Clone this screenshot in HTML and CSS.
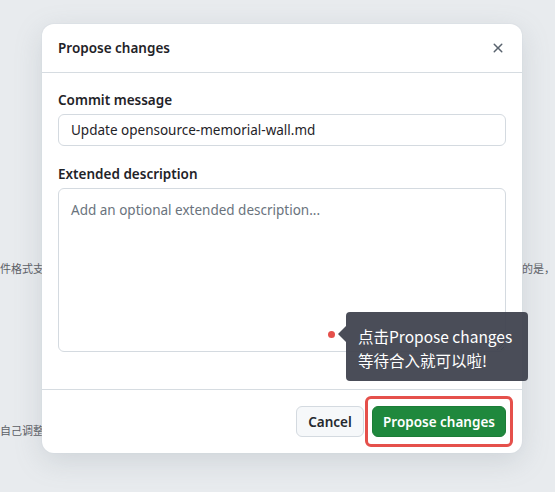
FILE: index.html
```html
<!DOCTYPE html>
<html lang="zh-CN">
<head>
<meta charset="utf-8">
<title>Propose changes</title>
<link rel="stylesheet" href="styles.css">
</head>
<body>
<div class="page">
  <div class="bg-line bg-line-1">
    <span class="bg-left">件格式支持</span>
    <span class="bg-right">的是，</span>
  </div>
  <div class="bg-line bg-line-2">
    <span class="bg-left">自己调整</span>
  </div>
</div>

<div class="dialog" role="dialog" aria-label="Propose changes">
  <div class="dialog-header">
    <h1 class="dialog-title">Propose changes</h1>
    <button class="close-btn" aria-label="Close">
      <svg width="16" height="16" viewBox="0 0 16 16" aria-hidden="true"><path d="M3.72 3.72a.75.75 0 0 1 1.06 0L8 6.94l3.22-3.22a.75.75 0 1 1 1.06 1.06L9.06 8l3.22 3.22a.75.75 0 1 1-1.06 1.06L8 9.06l-3.22 3.22a.75.75 0 0 1-1.06-1.06L6.94 8 3.72 4.78a.75.75 0 0 1 0-1.06Z" fill="currentColor"/></svg>
    </button>
  </div>
  <div class="dialog-body">
    <label class="field-label" for="msg">Commit message</label>
    <input id="msg" class="text-input" type="text" value="Update opensource-memorial-wall.md">
    <label class="field-label label-gap" for="desc">Extended description</label>
    <textarea id="desc" class="text-area" placeholder="Add an optional extended description..."></textarea>
  </div>
  <div class="dialog-footer">
    <button class="btn btn-default">Cancel</button>
    <button class="btn btn-primary highlighted">Propose changes</button>
  </div>

  <span class="dot"></span>
  <div class="tooltip">点击Propose changes<br>等待合入就可以啦!</div>
</div>
</body>
</html>
```

FILE: styles.css
```css
* { box-sizing: border-box; }

html, body {
  margin: 0;
  padding: 0;
}

body {
  width: 555px;
  height: 492px;
  overflow: hidden;
  background: #e8ebee;
  font-family: "Noto Sans", "Noto Sans CJK SC", sans-serif;
  color: #1f2328;
  position: relative;
}

.page {
  padding-top: 259px;
}

.bg-line {
  display: flex;
  justify-content: space-between;
  font-family: "Noto Sans CJK SC", sans-serif;
  font-size: 11px;
  line-height: 18px;
  color: #5c6066;
}

.bg-line-1 .bg-right { margin-right: 0; }

.bg-line-2 {
  margin-top: 144px;
}

.dialog {
  position: absolute;
  left: 42px;
  top: 24px;
  width: 480px;
  background: #fff;
  border-radius: 12px;
  box-shadow: 0 0 0 1px rgba(209, 217, 224, 0.25), 0 8px 28px rgba(120, 130, 140, 0.22);
}

.dialog-header {
  height: 49px;
  display: flex;
  align-items: center;
  justify-content: space-between;
  padding: 0 8px 0 16px;
  border-bottom: 1px solid #d6dce1;
}

.dialog-title {
  margin: 0;
  font-size: 13.5px;
  font-weight: 600;
  line-height: 20px;
}

.close-btn {
  width: 32px;
  height: 32px;
  display: flex;
  align-items: center;
  justify-content: center;
  border: 0;
  background: transparent;
  color: #59636e;
  padding: 0;
}

.dialog-body {
  display: flex;
  flex-direction: column;
  padding: 17px 16px 37px;
}

.field-label {
  font-size: 13.5px;
  font-weight: 600;
  line-height: 20px;
  margin-bottom: 4px;
}

.label-gap {
  margin-top: 18px;
}

.text-input,
.text-area {
  width: 100%;
  border: 1px solid #d4dae0;
  border-radius: 6px;
  font-family: "Noto Sans", sans-serif;
  font-size: 13.5px;
  line-height: 20px;
  color: #1f2328;
  background: #fff;
  outline: none;
}

.text-input {
  height: 32px;
  padding: 0 12px;
}

.text-area {
  height: 164px;
  padding: 11px 12px;
  resize: vertical;
  display: block;
}

.text-area::placeholder {
  color: #6a737d;
}

.dialog-footer {
  border-top: 1px solid #d6dce1;
  display: flex;
  justify-content: flex-end;
  gap: 8px;
  padding: 16px;
}

.btn {
  height: 31px;
  border-radius: 6px;
  font-family: "Noto Sans", sans-serif;
  font-size: 13.5px;
  font-weight: 600;
  padding: 0;
  line-height: 20px;
  white-space: nowrap;
}

.btn-default {
  background: #f6f8fa;
  border: 1px solid #d4dae0;
  color: #25292e;
  width: 68px;
}

.btn-primary {
  background: #1f883d;
  border: 1px solid #1c7d37;
  color: #fff;
  width: 134px;
}

.highlighted {
  position: relative;
}

.highlighted::after {
  content: "";
  position: absolute;
  inset: -11px -8px -11px -8px;
  border: 3px solid #e5504b;
  border-radius: 6px;
}

.dot {
  position: absolute;
  left: 286px;
  top: 307px;
  width: 7px;
  height: 7px;
  border-radius: 50%;
  background: #e5504b;
}

.tooltip {
  position: absolute;
  left: 304px;
  top: 288px;
  width: 182px;
  height: 69px;
  padding: 12px 10px 9px 12px;
  border-radius: 4px;
  background: rgba(63, 66, 78, 0.94);
  color: #fff;
  font-family: "Noto Sans CJK SC", sans-serif;
  font-size: 15.5px;
  line-height: 24px;
  white-space: nowrap;
}

.tooltip::before {
  content: "";
  position: absolute;
  left: -8px;
  top: 14px;
  border-style: solid;
  border-width: 8px 8px 8px 0;
  border-color: transparent rgba(63, 66, 78, 0.94) transparent transparent;
}
```
